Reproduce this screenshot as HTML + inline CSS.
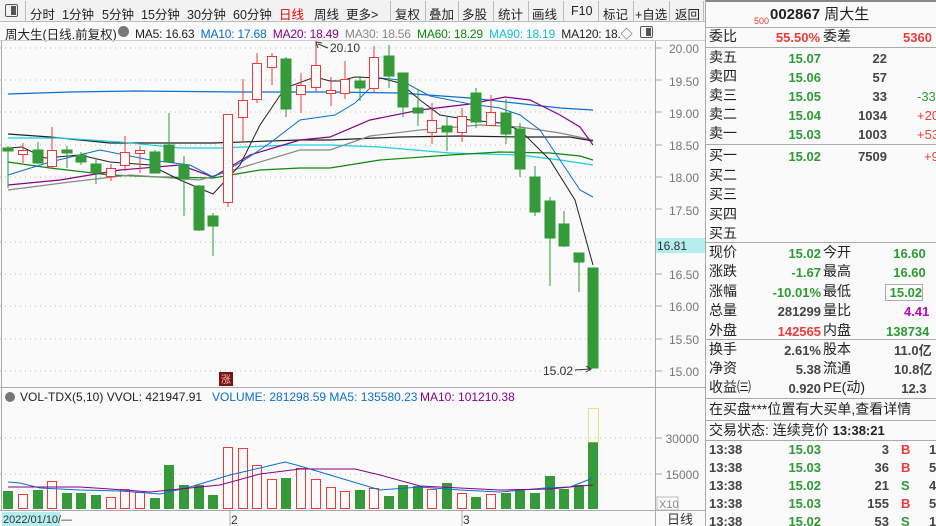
<!DOCTYPE html>
<html><head><meta charset="utf-8"><style>
*{margin:0;padding:0;box-sizing:border-box}
body{width:936px;height:526px;overflow:hidden;background:#fafafa;font-family:"Liberation Sans","Noto Sans CJK SC",sans-serif;position:relative}
.a{position:absolute;white-space:nowrap}
.tb{position:absolute;left:0;top:0;width:705px;height:22px;background:#f2f2f2;border-bottom:1px solid #bbb;font-size:12.5px;color:#222}
.tb span{position:absolute;top:4px}
.sep{position:absolute;top:1px;width:1px;height:20px;background:#bbb}
.rp{position:absolute;left:705px;top:0;width:231px;height:526px;border-left:1px solid #aaa;font-size:14px;color:#222;overflow:hidden}
.rp .a{line-height:19px}
.l{left:3px}
.v{font-weight:bold;font-size:13px;text-align:right}
.g{color:#2e9a36}.r{color:#f03a3a}.k{color:#444}
.hr{position:absolute;left:0;width:231px;height:1px;background:#aaa}
</style></head><body>
<div class="tb">
<div style="position:absolute;left:5px;top:4px;width:13px;height:13px;border:1px solid #555;border-radius:2px"><div style="position:absolute;right:1px;top:1px;width:5px;height:9px;background:#555"></div></div>
<div class="sep" style="left:25px"></div>
<span style="left:30px">分时</span><span style="left:62px">1分钟</span><span style="left:102px">5分钟</span><span style="left:141px">15分钟</span><span style="left:187px">30分钟</span><span style="left:233px">60分钟</span><span style="left:279px;color:#e00">日线</span><span style="left:314px">周线</span><span style="left:346px">更多&gt;</span>
<div class="sep" style="left:390px"></div><span style="left:395px">复权</span><div class="sep" style="left:425px"></div><span style="left:429px">叠加</span><div class="sep" style="left:458px"></div><span style="left:462px">多股</span><div class="sep" style="left:493px"></div><span style="left:498px">统计</span><div class="sep" style="left:528px"></div><span style="left:532px">画线</span><div class="sep" style="left:563px"></div><span style="left:571px">F10</span><div class="sep" style="left:598px"></div><span style="left:603px">标记</span><div class="sep" style="left:633px"></div><span style="left:635px">+自选</span><div class="sep" style="left:669px"></div><span style="left:675px">返回</span><div class="sep" style="left:703px"></div>
</div>
<div class="a" style="left:5px;top:24px;font-size:12.5px;color:#222">周大生(日线.前复权)</div>
<div class="a" style="left:118px;top:26px;width:11px;height:11px;border-radius:50%;background:#777"></div>
<div class="a" style="left:135px;top:25px;font-size:12px;letter-spacing:-0.2px"><span style="color:#222">MA5: 16.63</span> <span style="color:#0a6fd0">&nbsp;MA10: 17.68</span> <span style="color:#880088">&nbsp;MA20: 18.49</span> <span style="color:#888">&nbsp;MA30: 18.56</span> <span style="color:#0a8a0a">&nbsp;MA60: 18.29</span> <span style="color:#15c0d0">&nbsp;MA90: 18.19</span> <span style="color:#222">&nbsp;MA120: 18.</span><span style="color:#444">◇</span></div>
<div class="a" style="left:640px;top:26px;width:13px;height:12px;border:1px solid #555;border-radius:2px"><div style="position:absolute;right:1px;top:1px;width:5px;height:8px;background:#555"></div></div>

<svg class="a" style="left:0;top:0" width="705" height="526">
<g stroke="#bbb" stroke-dasharray="1,4">
<line x1="0" x2="655" y1="48" y2="48"/><line x1="0" x2="655" y1="80" y2="80"/><line x1="0" x2="655" y1="112" y2="112"/><line x1="0" x2="655" y1="145" y2="145"/><line x1="0" x2="655" y1="177" y2="177"/><line x1="0" x2="655" y1="209" y2="209"/><line x1="0" x2="655" y1="242" y2="242"/><line x1="0" x2="655" y1="274" y2="274"/><line x1="0" x2="655" y1="306" y2="306"/><line x1="0" x2="655" y1="339" y2="339"/><line x1="0" x2="655" y1="371" y2="371"/>
<line x1="0" x2="655" y1="438" y2="438"/><line x1="0" x2="655" y1="474" y2="474"/>
</g>
<line x1="655.5" x2="655.5" y1="40" y2="526" stroke="#aaa"/>
<line x1="1.5" x2="1.5" y1="40" y2="510" stroke="#aaa"/>
<line x1="0" x2="705" y1="40.5" y2="40.5" stroke="#ccc"/>
<line x1="0" x2="705" y1="387.5" y2="387.5" stroke="#aaa"/>
<line x1="0" x2="705" y1="510.5" y2="510.5" stroke="#aaa"/>
<g stroke="#aaa"><line x1="655" x2="662" y1="48" y2="48"/><line x1="655" x2="662" y1="80" y2="80"/><line x1="655" x2="662" y1="112" y2="112"/><line x1="655" x2="662" y1="145" y2="145"/><line x1="655" x2="662" y1="177" y2="177"/><line x1="655" x2="662" y1="209" y2="209"/><line x1="655" x2="662" y1="274" y2="274"/><line x1="655" x2="662" y1="306" y2="306"/><line x1="655" x2="662" y1="339" y2="339"/><line x1="655" x2="662" y1="371" y2="371"/><line x1="655" x2="662" y1="438" y2="438"/><line x1="655" x2="662" y1="474" y2="474"/></g>
<g font-size="12" fill="#777" text-anchor="end" font-family="Liberation Sans">
<text x="699" y="53">20.00</text><text x="699" y="86">19.50</text><text x="699" y="118">19.00</text><text x="699" y="150">18.50</text><text x="699" y="182">18.00</text><text x="699" y="215">17.50</text><text x="699" y="279">16.50</text><text x="699" y="311">16.00</text><text x="699" y="344">15.50</text><text x="699" y="376">15.00</text>
<text x="699" y="443">30000</text><text x="699" y="479">15000</text></g>
<rect x="656" y="238" width="49" height="15" fill="#b4eeee"/><text x="657" y="250" font-size="12" fill="#333">16.81</text>
<rect x="657" y="497" width="21" height="13" fill="none" stroke="#bbb"/><text x="659" y="508" font-size="11" fill="#888">X10</text>
<g fill="none" stroke-width="1.2">
<polyline stroke="#0a6fd0" points="8,94 70,92 135,91 240,92 330,92 400,93 470,98 560,108 593,110"/>
<polyline stroke="#222" points="8,134 50,137 110,143 180,143 213,143 300,140 330,140 400,137 460,136 520,137 570,137 593,141"/>
<polyline stroke="#15d0dd" points="8,138 60,138 120,142 180,148 220,148 290,145 330,145 380,147 450,153 520,155 560,160 593,165"/>
<polyline stroke="#0a8a0a" points="8,162 50,168 110,175 160,177 213,178 260,170 300,168 330,168 380,160 450,155 500,152 550,153 580,156 593,160"/>
<polyline stroke="#888" points="8,190 70,182 130,175 200,180 250,165 300,150 330,150 370,136 420,130 480,125 520,127 560,133 593,140"/>
<polyline stroke="#880088" points="8,185 60,180 120,170 180,165 213,177 250,155 300,140 330,137 370,120 420,110 470,104 505,97 530,100 560,115 580,127 593,145"/>
<polyline stroke="#0a6fd0" stroke-width="1" points="8,175 50,162 100,150 150,160 190,165 213,177 240,163 270,143 300,120 335,115 355,103 380,78 400,80 430,96 470,104 500,108 520,115 540,130 560,160 580,190 593,197"/>
<polyline stroke="#222" stroke-width="1" points="8,148 22,147 45,158 80,155 110,162 150,165 180,180 213,194 240,165 260,125 285,88 315,77 330,81 340,81 355,77 380,78 400,83 420,100 440,115 470,120 500,123 520,130 550,160 575,200 593,265"/>
</g>
<g stroke="#2e9a36" fill="#379a3a">
<line x1="8" x2="8" y1="146" y2="188"/><rect x="3" y="148" width="10" height="3"/>
<line x1="38" x2="38" y1="142" y2="164"/><rect x="33" y="150" width="10" height="13"/>
<line x1="67" x2="67" y1="146" y2="168"/><rect x="62" y="150" width="10" height="3"/>
<line x1="81" x2="81" y1="152" y2="165"/><rect x="76" y="155" width="10" height="7"/>
<line x1="96" x2="96" y1="158" y2="184"/><rect x="91" y="164" width="10" height="9"/>
<line x1="155" x2="155" y1="150" y2="173"/><rect x="150" y="152" width="10" height="21"/>
<line x1="169" x2="169" y1="113" y2="163"/><rect x="164" y="145" width="10" height="17"/>
<line x1="184" x2="184" y1="156" y2="216"/><rect x="179" y="165" width="10" height="14"/>
<line x1="199" x2="199" y1="185" y2="231"/><rect x="194" y="186" width="10" height="44"/>
<line x1="213" x2="213" y1="213" y2="256"/><rect x="208" y="216" width="10" height="10"/>
<line x1="286" x2="286" y1="57" y2="117"/><rect x="281" y="59" width="10" height="50"/>
<line x1="360" x2="360" y1="76" y2="101"/><rect x="355" y="81" width="10" height="7"/>
<line x1="389" x2="389" y1="45" y2="88"/><rect x="384" y="56" width="10" height="20"/>
<line x1="403" x2="403" y1="73" y2="117"/><rect x="398" y="73" width="10" height="34"/>
<line x1="418" x2="418" y1="89" y2="126"/><rect x="413" y="108" width="10" height="5"/>
<line x1="447" x2="447" y1="117" y2="151"/><rect x="442" y="126" width="10" height="6"/>
<line x1="476" x2="476" y1="88" y2="128"/><rect x="471" y="93" width="10" height="29"/>
<line x1="506" x2="506" y1="99" y2="144"/><rect x="501" y="113" width="10" height="21"/>
<line x1="520" x2="520" y1="123" y2="177"/><rect x="515" y="129" width="10" height="40"/>
<line x1="535" x2="535" y1="166" y2="216"/><rect x="530" y="177" width="10" height="35"/>
<line x1="550" x2="550" y1="197" y2="286"/><rect x="545" y="201" width="10" height="37"/>
<line x1="564" x2="564" y1="211" y2="247"/><rect x="559" y="224" width="10" height="22"/>
<line x1="579" x2="579" y1="253" y2="292"/><rect x="574" y="253" width="10" height="9"/>
<rect x="588" y="268" width="10" height="100"/>
</g>
<g stroke="#f03a3a" fill="#fafafa">
<line x1="23" x2="23" y1="143" y2="163"/><rect x="18.5" y="150.5" width="9" height="4"/>
<line x1="52" x2="52" y1="127" y2="168"/><rect x="47.5" y="150.5" width="9" height="16"/>
<line x1="111" x2="111" y1="164" y2="181"/><rect x="106.5" y="168.5" width="9" height="8"/>
<line x1="125" x2="125" y1="136" y2="171"/><rect x="120.5" y="152.5" width="9" height="13"/>
<line x1="140" x2="140" y1="146" y2="173"/><rect x="135.5" y="150.5" width="9" height="3"/>
<line x1="228" x2="228" y1="114" y2="207"/><rect x="223.5" y="114.5" width="9" height="88"/>
<line x1="243" x2="243" y1="79" y2="141"/><rect x="238.5" y="100.5" width="9" height="17"/>
<line x1="257" x2="257" y1="53" y2="103"/><rect x="252.5" y="63.5" width="9" height="36"/>
<line x1="272" x2="272" y1="53" y2="85"/><rect x="267.5" y="56.5" width="9" height="11"/>
<line x1="301" x2="301" y1="73" y2="113"/><rect x="296.5" y="85.5" width="9" height="9"/>
<line x1="316" x2="316" y1="42" y2="92"/><rect x="311.5" y="65.5" width="9" height="22"/>
<line x1="331" x2="331" y1="77" y2="106"/><rect x="326.5" y="90.5" width="9" height="3"/>
<line x1="345" x2="345" y1="61" y2="99"/><rect x="340.5" y="79.5" width="9" height="14"/>
<line x1="374" x2="374" y1="46" y2="93"/><rect x="369.5" y="57.5" width="9" height="31"/>
<line x1="432" x2="432" y1="103" y2="144"/><rect x="427.5" y="120.5" width="9" height="12"/>
<line x1="462" x2="462" y1="108" y2="142"/><rect x="457.5" y="116.5" width="9" height="16"/>
<line x1="491" x2="491" y1="95" y2="125"/><rect x="486.5" y="112.5" width="9" height="13"/>
</g>
<polyline points="322,43 316,42 318,48" fill="none" stroke="#333"/><line x1="318" y1="44" x2="328" y2="48" stroke="#333"/>
<text x="330" y="52" font-size="12" fill="#333">20.10</text>
<text x="543" y="375" font-size="12" fill="#333">15.02</text><line x1="575" y1="370" x2="590" y2="369" stroke="#333"/><polyline points="586,366 591,369 586,372" fill="none" stroke="#333"/>
<rect x="219" y="372" width="14" height="14" fill="#7a1414"/><text x="221" y="383" font-size="10" fill="#fbb">涨</text>
<circle cx="10" cy="397" r="5" fill="#777"/>
<text x="20" y="401" font-size="12" fill="#222">VOL-TDX(5,10) VVOL: 421947.91</text>
<text x="212" y="401" font-size="12" fill="#0a6fd0">VOLUME: 281298.59 MA5: 135580.23</text>
<text x="420" y="401" font-size="12" fill="#880088">MA10: 101210.38</text>
<g fill="#379a3a">
<rect x="3" y="491" width="10" height="18"/><rect x="33" y="490" width="10" height="19"/><rect x="62" y="493" width="10" height="16"/><rect x="76" y="493" width="10" height="16"/><rect x="91" y="495" width="10" height="14"/><rect x="150" y="498" width="10" height="11"/><rect x="164" y="465" width="10" height="44"/><rect x="179" y="485" width="10" height="24"/><rect x="194" y="485" width="10" height="24"/><rect x="208" y="495" width="10" height="14"/><rect x="281" y="478" width="10" height="31"/><rect x="355" y="490" width="10" height="19"/><rect x="384" y="496" width="10" height="13"/><rect x="398" y="485" width="10" height="24"/><rect x="413" y="486" width="10" height="23"/><rect x="442" y="483" width="10" height="26"/><rect x="471" y="497" width="10" height="12"/><rect x="501" y="493" width="10" height="16"/><rect x="515" y="489" width="10" height="20"/><rect x="530" y="493" width="10" height="16"/><rect x="545" y="476" width="10" height="33"/><rect x="559" y="489" width="10" height="20"/><rect x="574" y="485" width="10" height="24"/><rect x="588" y="442" width="10" height="67"/>
</g>
<g fill="none" stroke="#f03a3a">
<rect x="18.5" y="494.5" width="9" height="14"/><rect x="47.5" y="481.5" width="9" height="27"/><rect x="106.5" y="497.5" width="9" height="11"/><rect x="120.5" y="489.5" width="9" height="19"/><rect x="135.5" y="492.5" width="9" height="16"/><rect x="223.5" y="447.5" width="9" height="61"/><rect x="238.5" y="448.5" width="9" height="60"/><rect x="252.5" y="465.5" width="9" height="43"/><rect x="267.5" y="479.5" width="9" height="29"/><rect x="296.5" y="468.5" width="9" height="40"/><rect x="311.5" y="479.5" width="9" height="29"/><rect x="326.5" y="487.5" width="9" height="21"/><rect x="340.5" y="491.5" width="9" height="17"/><rect x="369.5" y="488.5" width="9" height="20"/><rect x="427.5" y="489.5" width="9" height="19"/><rect x="457.5" y="493.5" width="9" height="15"/><rect x="486.5" y="494.5" width="9" height="14"/>
</g>
<rect x="588.5" y="408.5" width="10" height="34" fill="none" stroke="#cccc00" stroke-dasharray="1,1"/>
<polyline fill="none" stroke="#0a6fd0" points="8,482 20,483 40,488 80,490 120,491 160,494 190,487 230,475 260,468 285,462 300,466 330,475 380,490 420,487 460,490 500,492 545,488 570,487 593,478"/>
<polyline fill="none" stroke="#880088" points="8,487 80,487 110,489 150,492 180,489 220,485 260,474 300,469 355,469 380,475 420,486 460,488 500,490 550,489 580,486 593,485"/>
<rect x="2" y="512" width="58" height="14" fill="#b4eeee"/>
<text x="3" y="523" font-size="11" fill="#333">2022/01/10/—</text>
<line x1="230" x2="230" y1="511" y2="526" stroke="#aaa"/><text x="231" y="524" font-size="12" fill="#333">2</text>
<line x1="462" x2="462" y1="511" y2="526" stroke="#aaa"/><text x="463" y="524" font-size="12" fill="#333">3</text>
<text x="667" y="524" font-size="13" fill="#333">日线</text>
</svg>

<div class="rp">
<div class="hr" style="top:0;background:#888;height:2px"></div>
<div class="a r" style="left:48px;top:12px;font-size:9px">500</div>
<div class="a" style="left:64px;top:5px;font-size:15px"><b>002867</b> 周大生</div>
<div class="hr" style="top:27px"></div>
<div class="a l" style="top:27px">委比</div><div class="a v r" style="right:116px;top:28px">55.50%</div><div class="a" style="left:117px;top:27px">委差</div><div class="a v r" style="left:197px;top:28px">5360</div>
<div class="hr" style="top:47px"></div>
<div class="a l" style="top:48px;line-height:19px">卖五<br>卖四<br>卖三<br>卖二<br>卖一</div>
<div class="a v g" style="right:115px;top:49px">15.07<br>15.06<br>15.05<br>15.04<br>15.03</div>
<div class="a v k" style="right:49px;top:49px">22<br>57<br>33<br>1034<br>1003</div>
<div class="a" style="left:211px;top:49px;font-size:13px;line-height:19px"><br><br><span class="g">-33</span><br><span class="r">+20</span><br><span class="r">+53</span></div>
<div class="hr" style="top:144px"></div>
<div class="a l" style="top:146px;line-height:19.5px">买一<br>买二<br>买三<br>买四<br>买五</div>
<div class="a v g" style="right:115px;top:147px">15.02</div><div class="a v k" style="right:49px;top:147px">7509</div><div class="a r" style="left:218px;top:147px;font-size:13px">+9</div>
<div class="hr" style="top:242px"></div>
<div class="a l" style="top:243px;line-height:19.4px">现价<br>涨跌<br>涨幅<br>总量<br>外盘</div>
<div class="a v" style="right:115px;top:244px;line-height:19.4px"><span class="g">15.02</span><br><span class="g">-1.67</span><br><span class="g">-10.01%</span><br><span class="k">281299</span><br><span class="r">142565</span></div>
<div class="a" style="left:117px;top:243px;line-height:19.4px">今开<br>最高<br>最低<br>量比<br>内盘</div>
<div class="a v" style="left:180px;top:244px;line-height:19.4px;text-align:left"><span class="g">&nbsp;&nbsp;16.60</span><br><span class="g">&nbsp;&nbsp;16.60</span><br><span class="g" style="outline:1px solid #aaa">&nbsp;15.02</span><br><span style="color:#c000c0">&nbsp;&nbsp;&nbsp;&nbsp;&nbsp;4.41</span><br><span class="g">138734</span></div>
<div class="hr" style="top:339px"></div>
<div class="a l" style="top:340px;line-height:19px">换手<br>净资<br>收益㈢</div>
<div class="a v k" style="right:115px;top:341px;line-height:19px">2.61%<br>5.38<br>0.920</div>
<div class="a" style="left:117px;top:340px;line-height:19px">股本<br>流通<br>PE(动)</div>
<div class="a v k" style="left:188px;top:341px;line-height:19px;text-align:left">11.0亿<br>10.8亿<br>&nbsp;&nbsp;12.3</div>
<div class="hr" style="top:398px"></div>
<div class="a l" style="top:400px">在买盘***位置有大买单,查看详情</div>
<div class="hr" style="top:420px"></div>
<div class="a l" style="top:421px">交易状态: 连续竞价 <b style="font-size:13px">13:38:21</b></div>
<div class="hr" style="top:440px"></div>
<div class="a l v k" style="top:441px;text-align:left;line-height:18px">13:38<br>13:38<br>13:38<br>13:38<br>13:38</div>
<div class="a v g" style="right:115px;top:441px;line-height:18px">15.03<br>15.03<br>15.02<br>15.03<br>15.02</div>
<div class="a v k" style="right:47px;top:441px;line-height:18px">3<br>36<br>21<br>155<br>53</div>
<div class="a v" style="left:195px;top:441px;line-height:18px;text-align:left"><span class="r">B</span><br><span class="r">B</span><br><span class="g">S</span><br><span class="r">B</span><br><span class="g">S</span></div>
<div class="a v k" style="left:223px;top:441px;line-height:18px;text-align:left">1<br>5<br>4<br>5<br>12</div>
</div>
</body></html>
